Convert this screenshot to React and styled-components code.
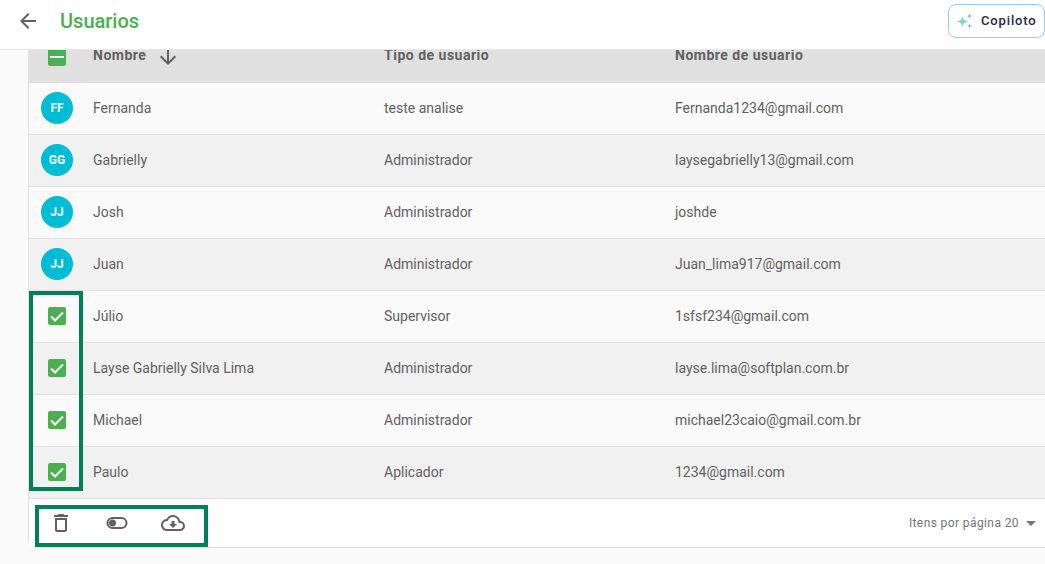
import React from 'react'
import styled, { createGlobalStyle } from 'styled-components'
import { MdArrowBack, MdArrowDownward, MdOutlineDelete, MdOutlineCloudDownload, MdRemove, MdArrowDropDown } from 'react-icons/md'

const GlobalStyle = createGlobalStyle`
  html, body { margin: 0; padding: 0; height: 100%; overflow: hidden; background: #fafafa; }
  * { box-sizing: border-box; }
  body { font-family: Roboto, "Liberation Sans", sans-serif; color: #616161; }
`

const Page = styled.div`
  width: 1045px;
  height: 564px;
  position: relative;
  overflow: hidden;
`

const TopBar = styled.header`
  position: relative;
  z-index: 2;
  height: 50px;
  background: #fff;
  border-bottom: 1px solid #e8e8e8;
  display: flex;
  align-items: center;
  padding-left: 16px;
  padding-bottom: 8px;
  color: #616161;
`

const BackButton = styled.div`
  width: 24px;
  height: 24px;
  display: flex;
  font-size: 24px;
  margin-right: 20px;
`

const Title = styled.h1`
  margin: 0;
  font-size: 20px;
  font-weight: 500;
  color: #4caf50;
`

const CopilotButton = styled.div`
  position: absolute;
  left: 948px;
  top: 4px;
  width: 97px;
  height: 34px;
  display: flex;
  align-items: center;
  gap: 7px;
  padding: 0 0 1px 7px;
  border: 1px solid #95cfe0;
  border-radius: 8px;
  font-size: 13px;
  font-weight: 500;
  letter-spacing: 0.85px;
  color: #222b3a;
  background: #fff;
`

const Table = styled.div`
  position: relative;
  margin: -19px 0 0 28px;
  width: 1017px;
  border-left: 1px solid #e0e0e0;
  border-bottom: 1px solid #e0e0e0;
  border-bottom-left-radius: 8px;
`

const Row = styled.div`
  display: grid;
  grid-template-columns: 64px 291px 291px 1fr;
  align-items: center;
  height: 52px;
  font-size: 14px;
  background: ${p => (p.$head ? '#e0e0e0' : p.$even ? '#f1f1f1' : '#fafafa')};
  border-bottom: 1px solid #e0e0e0;
  font-weight: ${p => (p.$head ? 700 : 400)};
  letter-spacing: ${p => (p.$head ? '0.5px' : '0')};
  padding-bottom: ${p => (p.$head ? '4px' : '1px')};
`

const LeadCell = styled.div`
  display: flex;
  justify-content: center;
  padding-right: 8px;
  padding-top: ${p => (p.$head ? '5px' : '0')};
`

const NameCell = styled.div`
  display: flex;
  align-items: center;
  gap: 10px;
`

const SortIcon = styled.span`
  display: flex;
  font-size: 24px;
  margin-top: 4px;
`

const Avatar = styled.div`
  width: 32px;
  height: 32px;
  border-radius: 50%;
  background: #00bcd4;
  color: #fff;
  font-size: 12px;
  font-weight: 700;
  display: flex;
  align-items: center;
  justify-content: center;
`

const Check = styled.div`
  width: 18px;
  height: 18px;
  border-radius: 2px;
  background: #4caf50;
  color: #fff;
  display: flex;
  align-items: center;
  justify-content: center;
  font-size: 24px;
  flex-shrink: 0;
  svg { flex-shrink: 0; }
`

const Footer = styled.div`
  height: 48px;
  display: flex;
  align-items: center;
  justify-content: space-between;
  background: #fff;
  padding: 0 2px 0 20px;
`

const Actions = styled.div`
  display: flex;
  align-items: center;
  gap: 32px;
  color: #616161;
`

const ActionIcon = styled.span`
  display: flex;
  width: 24px;
  height: 24px;
  font-size: 24px;
`

const PageSize = styled.div`
  display: flex;
  align-items: center;
  gap: 0;
  font-size: 12px;
  letter-spacing: 0.4px;
  color: #757575;
`

const CaretIcon = styled.span`
  display: flex;
  font-size: 24px;
`

const Highlight = styled.div`
  position: absolute;
  border: 4px solid #008055;
  pointer-events: none;
`

const CheckHighlight = styled(Highlight)`
  left: 29px;
  top: 291px;
  width: 54px;
  height: 200px;
`

const ActionHighlight = styled(Highlight)`
  left: 35px;
  top: 505px;
  width: 173px;
  height: 42px;
`

const users = [
  { name: 'Fernanda', initials: 'FF', type: 'teste analise', login: 'Fernanda1234@gmail.com' },
  { name: 'Gabrielly', initials: 'GG', type: 'Administrador', login: 'laysegabrielly13@gmail.com' },
  { name: 'Josh', initials: 'JJ', type: 'Administrador', login: 'joshde' },
  { name: 'Juan', initials: 'JJ', type: 'Administrador', login: 'Juan_lima917@gmail.com' },
  { name: 'Júlio', checked: true, type: 'Supervisor', login: '1sfsf234@gmail.com' },
  { name: 'Layse Gabrielly Silva Lima', checked: true, type: 'Administrador', login: 'layse.lima@softplan.com.br' },
  { name: 'Michael', checked: true, type: 'Administrador', login: 'michael23caio@gmail.com.br' },
  { name: 'Paulo', checked: true, type: 'Aplicador', login: '1234@gmail.com' },
]

const SparkleIcon = () => (
  <svg width="18" height="16" viewBox="0 0 18 16">
    <path d="M6.5 3.5 L8 7 L12 8.5 L8 10 L6.5 13.5 L5 10 L1 8.5 L5 7 Z" fill="#7dd8b8" />
    <path d="M13.5 0.5 L14.2 2.3 L16 3 L14.2 3.7 L13.5 5.5 L12.8 3.7 L11 3 L12.8 2.3 Z" fill="#6cc4c4" />
    <path d="M13.5 10.5 L14.2 12.3 L16 13 L14.2 13.7 L13.5 15.5 L12.8 13.7 L11 13 L12.8 12.3 Z" fill="#6cc4d4" />
  </svg>
)

const ToggleIcon = () => (
  <svg width="24" height="24" viewBox="0 0 24 24" fill="none">
    <rect x="2.5" y="7" width="19" height="10" rx="5" stroke="currentColor" strokeWidth="2" />
    <circle cx="7.5" cy="12" r="3.5" fill="currentColor" />
  </svg>
)

const CheckMark = () => (
  <svg width="18" height="18" viewBox="0 0 18 18" fill="none">
    <path d="M3 9.5 L7 13.5 L15 5.5" stroke="currentColor" strokeWidth="2" />
  </svg>
)

const App = () => (
  <Page>
    <GlobalStyle />
    <TopBar>
      <BackButton><MdArrowBack /></BackButton>
      <Title>Usuarios</Title>
      <CopilotButton><SparkleIcon />Copiloto</CopilotButton>
    </TopBar>
    <Table>
      <Row $head>
        <LeadCell $head><Check><MdRemove /></Check></LeadCell>
        <NameCell>Nombre <SortIcon><MdArrowDownward /></SortIcon></NameCell>
        <div>Tipo de usuario</div>
        <div>Nombre de usuario</div>
      </Row>
      {users.map((u, i) => (
        <Row key={u.name} $even={i % 2 === 1}>
          <LeadCell>
            {u.checked ? <Check><CheckMark /></Check> : <Avatar>{u.initials}</Avatar>}
          </LeadCell>
          <div>{u.name}</div>
          <div>{u.type}</div>
          <div>{u.login}</div>
        </Row>
      ))}
      <Footer>
        <Actions>
          <ActionIcon><MdOutlineDelete /></ActionIcon>
          <ActionIcon><ToggleIcon /></ActionIcon>
          <ActionIcon><MdOutlineCloudDownload /></ActionIcon>
        </Actions>
        <PageSize>Itens por página 20 <CaretIcon><MdArrowDropDown /></CaretIcon></PageSize>
      </Footer>
    </Table>
    <CheckHighlight />
    <ActionHighlight />
  </Page>
)

export default App
